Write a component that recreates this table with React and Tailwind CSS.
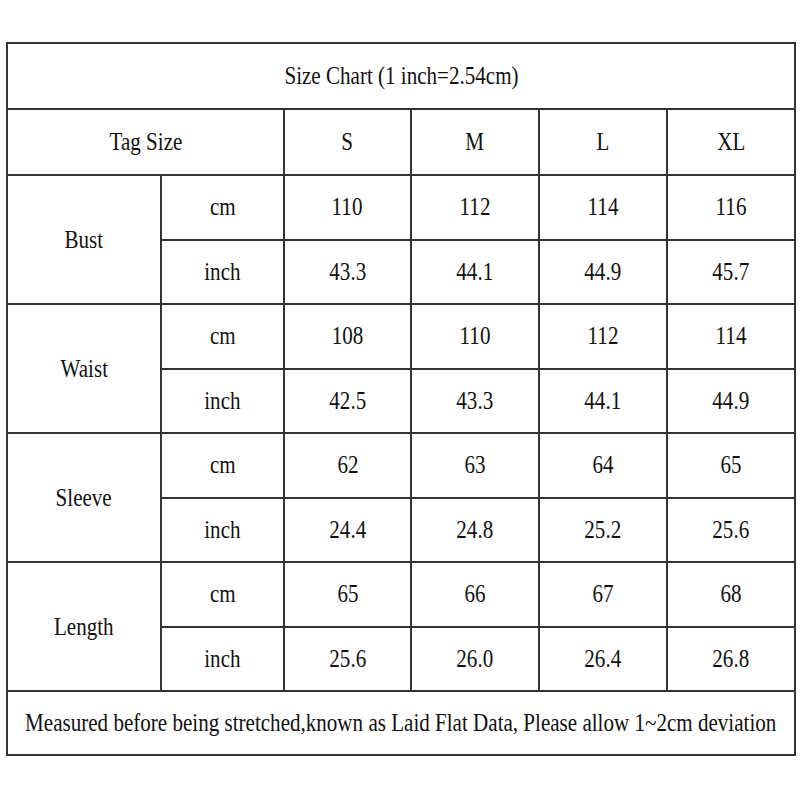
import React from 'react';

const rows = [
  { name: 'Bust', cm: ['110', '112', '114', '116'], inch: ['43.3', '44.1', '44.9', '45.7'] },
  { name: 'Waist', cm: ['108', '110', '112', '114'], inch: ['42.5', '43.3', '44.1', '44.9'] },
  { name: 'Sleeve', cm: ['62', '63', '64', '65'], inch: ['24.4', '24.8', '25.2', '25.6'] },
  { name: 'Length', cm: ['65', '66', '67', '68'], inch: ['25.6', '26.0', '26.4', '26.8'] },
];

const T = ({ children }) => (
  <span className="inline-block scale-x-[0.81] whitespace-nowrap">{children}</span>
);

const cell = 'border-2 border-[#333] text-center align-middle p-0';

export default function App() {
  return (
    <div className="w-[800px] h-[800px] bg-white pt-[42px] pl-[6px] font-['Liberation_Serif','Times_New_Roman',serif] text-[26px] text-[#111] leading-none">
      <table className="table-fixed border-collapse w-[788px]">
        <colgroup>
          <col className="w-[154px]" />
          <col className="w-[123px]" />
          <col className="w-[127px]" />
          <col className="w-[128px]" />
          <col className="w-[128px]" />
          <col className="w-[128px]" />
        </colgroup>
        <tbody>
          <tr className="h-[66px]">
            <td colSpan={6} className={cell}><T>Size Chart (1 inch=2.54cm)</T></td>
          </tr>
          <tr className="h-[66px]">
            <td colSpan={2} className={cell}><T>Tag Size</T></td>
            {['S', 'M', 'L', 'XL'].map((s) => (
              <td key={s} className={cell}><T>{s}</T></td>
            ))}
          </tr>
          {rows.map((r) => (
            <React.Fragment key={r.name}>
              <tr className="h-[64.5px]">
                <td rowSpan={2} className={cell}><T>{r.name}</T></td>
                <td className={cell}><T>cm</T></td>
                {r.cm.map((v, i) => (
                  <td key={i} className={cell}><T>{v}</T></td>
                ))}
              </tr>
              <tr className="h-[64.5px]">
                <td className={cell}><T>inch</T></td>
                {r.inch.map((v, i) => (
                  <td key={i} className={cell}><T>{v}</T></td>
                ))}
              </tr>
            </React.Fragment>
          ))}
          <tr className="h-[64px]">
            <td colSpan={6} className={cell}>
              <div className="flex justify-center">
                <span className="inline-block shrink-0 scale-x-[0.81] whitespace-nowrap">
                  Measured before being stretched,known as Laid Flat Data, Please allow 1~2cm deviation
                </span>
              </div>
            </td>
          </tr>
        </tbody>
      </table>
    </div>
  );
}
